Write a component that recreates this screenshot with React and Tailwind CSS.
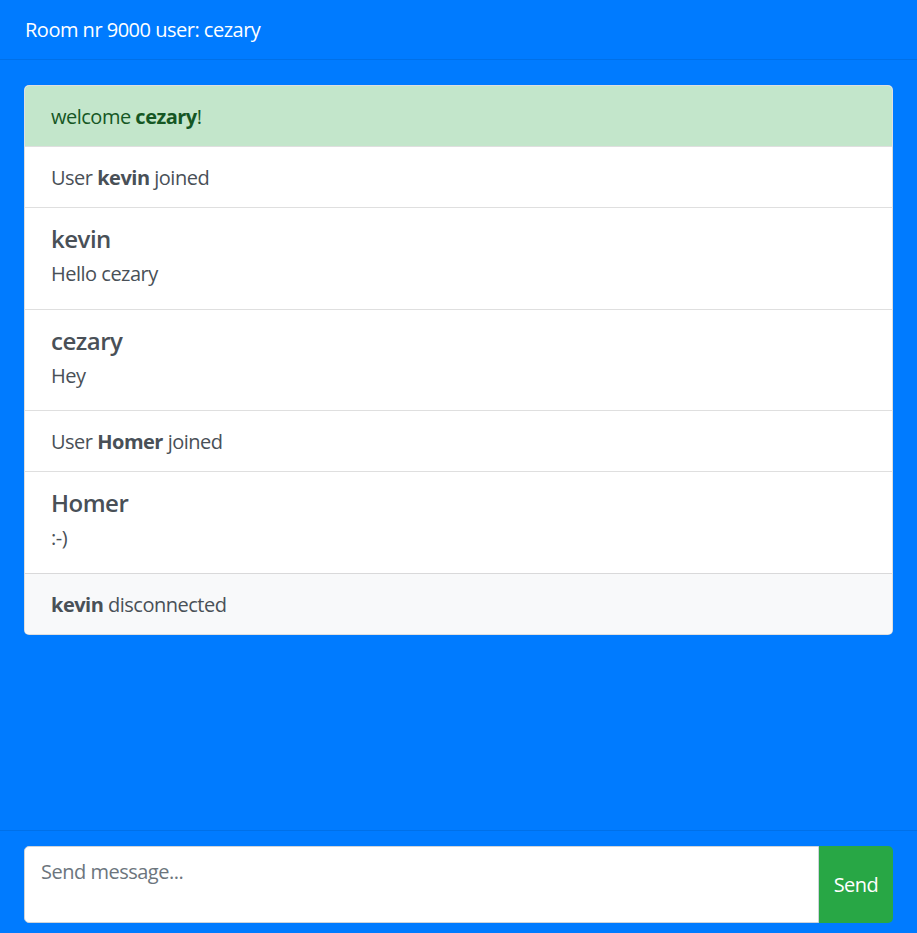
import React from "react";

const font = { fontFamily: '"Open Sans", "Noto Sans", Arial, sans-serif' };

function Item({ children, className = "" }) {
  return (
    <div className={`px-[26px] pt-[16px] pb-[14px] border-t border-[rgba(0,0,0,0.125)] first:border-t-0 text-[20px] leading-[30px] ${className}`}>
      {children}
    </div>
  );
}

function Msg({ name, text }) {
  return (
    <div className="px-[26px] pt-[16px] pb-[19.67px] border-t border-[rgba(0,0,0,0.125)] text-[#495057]">
      <div className="text-[24px] leading-[30px] font-semibold mb-[5px]">{name}</div>
      <div className="text-[20px] leading-[30px]">{text}</div>
    </div>
  );
}

export default function App() {
  return (
    <div className="h-[933px] w-full flex flex-col bg-[#007bff] tracking-[-0.5px]" style={font}>
      <div className="h-[60px] shrink-0 border-b border-[#0070e8] flex items-center px-[25px]">
        <span className="text-white text-[20px] leading-[30px]">Room nr 9000 user: cezary</span>
      </div>
      <div className="flex-1 px-[24px] pt-[25px]">
        <div className="bg-white rounded-[5px] border border-[rgba(0,0,0,0.125)] overflow-hidden text-[#495057]">
          <Item className="bg-[#c3e6cb] text-[#155724]">
            welcome <b className="font-bold">cezary</b>!
          </Item>
          <Item>
            User <b className="font-bold">kevin</b> joined
          </Item>
          <Msg name="kevin" text="Hello cezary" />
          <Msg name="cezary" text="Hey" />
          <Item>
            User <b className="font-bold">Homer</b> joined
          </Item>
          <Msg name="Homer" text=":-)" />
          <Item className="bg-[#f8f9fa]">
            <b className="font-bold">kevin</b> disconnected
          </Item>
        </div>
      </div>
      <div className="h-[103px] shrink-0 border-t border-[#0070e8] px-[24px] pt-[15px] pb-[10px] flex">
        <div className="flex-1 bg-white rounded-l-[5px] border border-[#ced4da] px-[16px] py-[10px]">
          <span className="text-[20px] leading-[30px] text-[#6c757d]">Send message...</span>
        </div>
        <button className="w-[74px] bg-[#28a745] text-white text-[20px] rounded-r-[5px] flex items-center justify-center">
          Send
        </button>
      </div>
    </div>
  );
}
